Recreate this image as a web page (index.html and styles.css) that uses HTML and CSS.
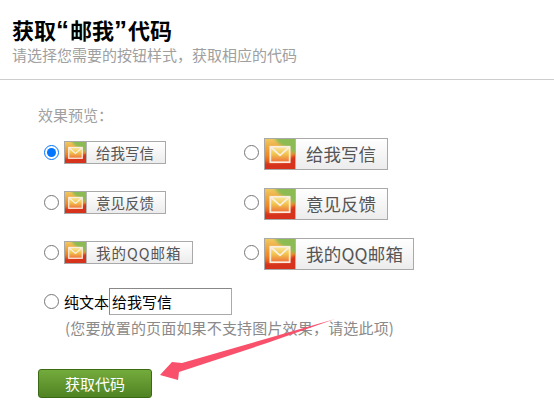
FILE: index.html
```html
<!doctype html>
<html lang="zh-CN">
<head>
<meta charset="utf-8" />
<title>获取“邮我”代码</title>
<link rel="stylesheet" href="styles.css">
</head>
<body>
 <svg class="defs" width="0" height="0" aria-hidden="true">
   <defs>
     <linearGradient id="envFill" x1="0" y1="0" x2="0" y2="1">
       <stop offset="0" stop-color="#f8e6a0" />
       <stop offset="0.45" stop-color="#f0c850" />
       <stop offset="1" stop-color="#f0703a" />
     </linearGradient>
     <linearGradient id="tileBg" x1="0" y1="0" x2="0" y2="1">
       <stop offset="0" stop-color="#f0c860" />
       <stop offset="0.55" stop-color="#ef8a24" />
       <stop offset="1" stop-color="#d8301a" />
     </linearGradient>
     <filter id="soft" x="-20%" y="-20%" width="140%" height="140%">
       <feGaussianBlur stdDeviation="1.4" />
     </filter>
     <symbol id="mailTile" viewBox="0 0 31 31" preserveAspectRatio="none">
       <rect width="31" height="31" fill="url(#tileBg)" />
       <g filter="url(#soft)">
         <path d="M9 -3H34V17C27 13 22 9 16 6C13 4 11 1 9 -3Z" fill="#8cbb52" />
         <path d="M-3 34V24C8 27 20 26 34 14V34Z" fill="#d6301a" />
       </g>
       <rect x="5.5" y="8" width="20" height="16" fill="url(#envFill)" stroke="#fbeee0" stroke-width="1.8" />
       <path d="M6 8.5L15.5 17L25 8.5" fill="none" stroke="#fbeee0" stroke-width="1.8" />
     </symbol>
   </defs>
 </svg>

 <header class="page-head">
   <h1>获取<span class="q">“</span>邮我<span class="q">”</span>代码</h1>
   <p>请选择您需要的按钮样式，获取相应的代码</p>
 </header>

 <main class="panel">
   <div class="preview-label">效果预览：</div>
   <div class="options">
     <label class="option">
       <input type="radio" name="style" checked>
       <span class="mail-btn small"><svg class="tile"><use href="#mailTile" /></svg><span class="cap">给我写信</span></span>
     </label>
     <label class="option">
       <input type="radio" name="style">
       <span class="mail-btn large"><svg class="tile"><use href="#mailTile" /></svg><span class="cap">给我写信</span></span>
     </label>
     <label class="option">
       <input type="radio" name="style">
       <span class="mail-btn small"><svg class="tile"><use href="#mailTile" /></svg><span class="cap">意见反馈</span></span>
     </label>
     <label class="option">
       <input type="radio" name="style">
       <span class="mail-btn large"><svg class="tile"><use href="#mailTile" /></svg><span class="cap">意见反馈</span></span>
     </label>
     <label class="option">
       <input type="radio" name="style">
       <span class="mail-btn small wide"><svg class="tile"><use href="#mailTile" /></svg><span class="cap">我的QQ邮箱</span></span>
     </label>
     <label class="option">
       <input type="radio" name="style">
       <span class="mail-btn large wide"><svg class="tile"><use href="#mailTile" /></svg><span class="cap">我的QQ邮箱</span></span>
     </label>
   </div>
   <label class="text-option">
     <input type="radio" name="style">
     <span>纯文本</span><input class="text-input" type="text" value="给我写信">
   </label>
   <p class="hint">(您要放置的页面如果不支持图片效果，请选此项)</p>
   <button class="get-code" type="button">获取代码</button>
 </main>

 <!-- annotation arrow over the page -->
 <svg class="arrow" width="554" height="411" viewBox="0 0 554 411" aria-hidden="true">
   <path d="M335 319L182 363L172 362L160 375L178 380L179 372L267 343Z" fill="#f9506c" />
 </svg>
</body>
</html>
```

FILE: styles.css
```css
*{box-sizing:border-box;margin:0;padding:0}
html,body{height:411px;overflow:hidden}
body{
  background:#fff;color:#000;position:relative;
  font-family:"Noto Sans CJK SC","Liberation Sans",sans-serif;
  font-size:15px;
}
.defs{position:absolute}
input[type=radio]{width:15px;height:15px;margin:0 5px 0 0;flex:none}

.page-head{height:80px;padding:16px 0 0 13px;border-bottom:1px solid #ccc}
.page-head h1{font-size:22px;line-height:26px;font-weight:700;color:#000;margin-left:-1px}
.page-head h1 .q{font-family:"Liberation Sans",sans-serif;font-size:26px;letter-spacing:1px;line-height:20px}
.page-head p{font-size:15px;line-height:22px;color:#a0a0a0;margin-top:2px;margin-left:-1px}

.panel{padding:24px 0 0 44px}
.preview-label{margin-left:-6px;line-height:22px;color:#a0a0a0}
.options{display:grid;grid-template-columns:200px auto;grid-auto-rows:50px;justify-content:start;margin-top:1px}
.option{display:flex;align-items:center;height:50px}

.mail-btn{display:flex;border:1px solid #a9a9a9;background:linear-gradient(#fff,#ececec);color:#555}
.tile{display:block;flex:none;border-right:1px solid #b5b5b5}
.mail-btn.small{width:102px;height:23px}
.mail-btn.small.wide{width:129px}
.mail-btn.small .tile{width:22px;height:21px}
.mail-btn.small .cap{font-size:14.5px;line-height:21px;padding-left:9px;white-space:nowrap}
.mail-btn.small.wide .cap{letter-spacing:1px}
.mail-btn.large{width:124px;height:32px;margin-top:3px}
.mail-btn.large.wide{width:150px}
.mail-btn.large .tile{width:31px;height:30px}
.mail-btn.large .cap{font-size:17.5px;line-height:30px;padding-left:10px;white-space:nowrap}
.mail-btn.large.wide .cap{letter-spacing:.2px}

.text-option{display:flex;align-items:center;height:27px;margin-top:11px}
.text-input{
  width:123px;height:27px;margin-left:0;padding:0 2px;
  border:1px solid #aaa;border-top-color:#888;border-left-color:#888;
  font:inherit;color:#000;background:#fff;outline:0;
}
.hint{margin:2px 0 0 21px;line-height:22px;color:#8a8a8a;letter-spacing:.17px}

.get-code{
  display:block;width:114px;height:29px;margin:30px 0 0 -6px;
  border:1px solid #3b6a14;border-radius:3px;
  background:linear-gradient(#74ab3c,#4f8323);
  color:#fff;font:inherit;line-height:27px;cursor:pointer;
}

.arrow{position:absolute;left:0;top:0;pointer-events:none}
```
